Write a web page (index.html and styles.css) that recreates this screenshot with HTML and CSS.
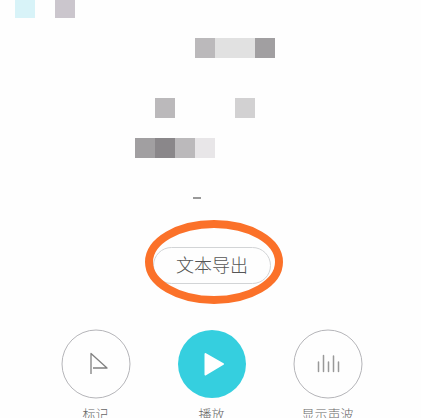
FILE: index.html
```html
<!DOCTYPE html>
<html lang="zh-CN">
<head>
<meta charset="utf-8">
<meta name="viewport" content="width=device-width, initial-scale=1">
<title>录音</title>
<link rel="stylesheet" href="styles.css">
</head>
<body>
<main class="screen">
  <div class="mosaic" aria-hidden="true">
    <span class="tile r1 c1 ice"></span>
    <span class="tile r1 c3 mauve"></span>
    <span class="tile r3 c10 silver"></span>
    <span class="tile r3 c11 pale"></span>
    <span class="tile r3 c12 pale"></span>
    <span class="tile r3 c13 gray"></span>
    <span class="tile r6 c8 silver"></span>
    <span class="tile r6 c12 light"></span>
    <span class="tile r8 c7 gray"></span>
    <span class="tile r8 c8 dark"></span>
    <span class="tile r8 c9 silver"></span>
    <span class="tile r8 c10 faint"></span>
  </div>
  <div class="dash"></div>
  <div class="export">
    <button class="export-button" type="button">文本导出</button>
    <svg class="ring" viewBox="0 0 140 86" aria-hidden="true"><ellipse cx="70" cy="43" rx="65" ry="38"/></svg>
  </div>
  <nav class="controls">
    <button class="control" type="button">
      <svg class="disc" viewBox="0 0 70 70" aria-hidden="true"><circle class="outline" cx="35" cy="35" r="34"/><path class="flag" d="M30 45V24.500L46 39H32"/></svg>
      <span>标记</span>
    </button>
    <button class="control" type="button">
      <svg class="disc" viewBox="0 0 70 70" aria-hidden="true"><circle class="solid" cx="35" cy="35" r="34"/><path class="play" d="M28.500 25L46 35L28.500 45.500Z"/></svg>
      <span>播放</span>
    </button>
    <button class="control" type="button">
      <svg class="disc" viewBox="0 0 70 70" aria-hidden="true"><circle class="outline" cx="35" cy="35" r="34"/><path class="wave" d="M25.500 33V42.500M30.500 26.500V42.500M35.500 33V42.500M40.500 27V42.500M45.500 33V42.500"/></svg>
      <span>显示声波</span>
    </button>
  </nav>
</main>
</body>
</html>
```
FILE: styles.css
```css
* { box-sizing: border-box; }

body {
  margin: 0;
  background: #fefefe;
  color: #666;
  font-family: "Noto Sans CJK SC", sans-serif;
  font-weight: 300;
}

.screen {
  display: flex;
  flex-direction: column;
  align-items: center;
  height: 100vh;
  overflow: hidden;
}

.mosaic {
  flex: none;
  display: grid;
  grid-template-columns: repeat(13, 20px);
  grid-template-rows: 18px repeat(7, 20px);
  margin-right: 131px;
}

.r1 { grid-row: 1; }
.r3 { grid-row: 3; }
.r6 { grid-row: 6; }
.r8 { grid-row: 8; }
.c1 { grid-column: 1; }
.c3 { grid-column: 3; }
.c7 { grid-column: 7; }
.c8 { grid-column: 8; }
.c9 { grid-column: 9; }
.c10 { grid-column: 10; }
.c11 { grid-column: 11; }
.c12 { grid-column: 12; }
.c13 { grid-column: 13; }

.ice { background: #d8f3f8; }
.mauve { background: #cbc6cd; }
.silver { background: #bbb9bb; }
.pale { background: #e1e1e1; }
.gray { background: #a19fa1; }
.dark { background: #8a878a; }
.light { background: #d2d1d2; }
.faint { background: #e8e6e8; }

.dash {
  flex: none;
  width: 8px;
  height: 2px;
  margin: 39px 27px 0 0;
  background: #999;
}

.export {
  flex: none;
  position: relative;
  margin: 48px 0 0 3px;
}

.export-button {
  display: block;
  width: 118px;
  height: 37px;
  padding: 0 0 4px;
  border: 1px solid #d2d4d6;
  border-radius: 19px;
  background: none;
  color: #555;
  font: inherit;
  font-size: 18px;
  line-height: 30px;
}

.ring {
  position: absolute;
  top: -28px;
  left: -9px;
  width: 140px;
  height: 86px;
  fill: none;
  stroke: #fb7129;
  stroke-width: 8px;
  pointer-events: none;
}

.controls {
  flex: none;
  display: flex;
  justify-content: center;
  gap: 46px;
  margin: 45px 0 0 2px;
}

.control {
  display: flex;
  flex-direction: column;
  align-items: center;
  gap: 7px;
  width: 70px;
  padding: 0;
  border: 0;
  background: none;
  color: inherit;
  font: inherit;
  font-size: 13px;
  line-height: 16px;
  white-space: nowrap;
}

.disc {
  width: 70px;
  height: 70px;
  fill: none;
}

.outline { stroke: #b5b5b9; }
.solid { fill: #35cfdf; }
.flag { stroke: #808080; stroke-width: 1.3; stroke-linejoin: round; }
.play { fill: #fff; stroke: #fff; stroke-linejoin: round; stroke-width: 2; }
.wave { stroke: #999; stroke-width: 1.5; stroke-linecap: round; }
```
